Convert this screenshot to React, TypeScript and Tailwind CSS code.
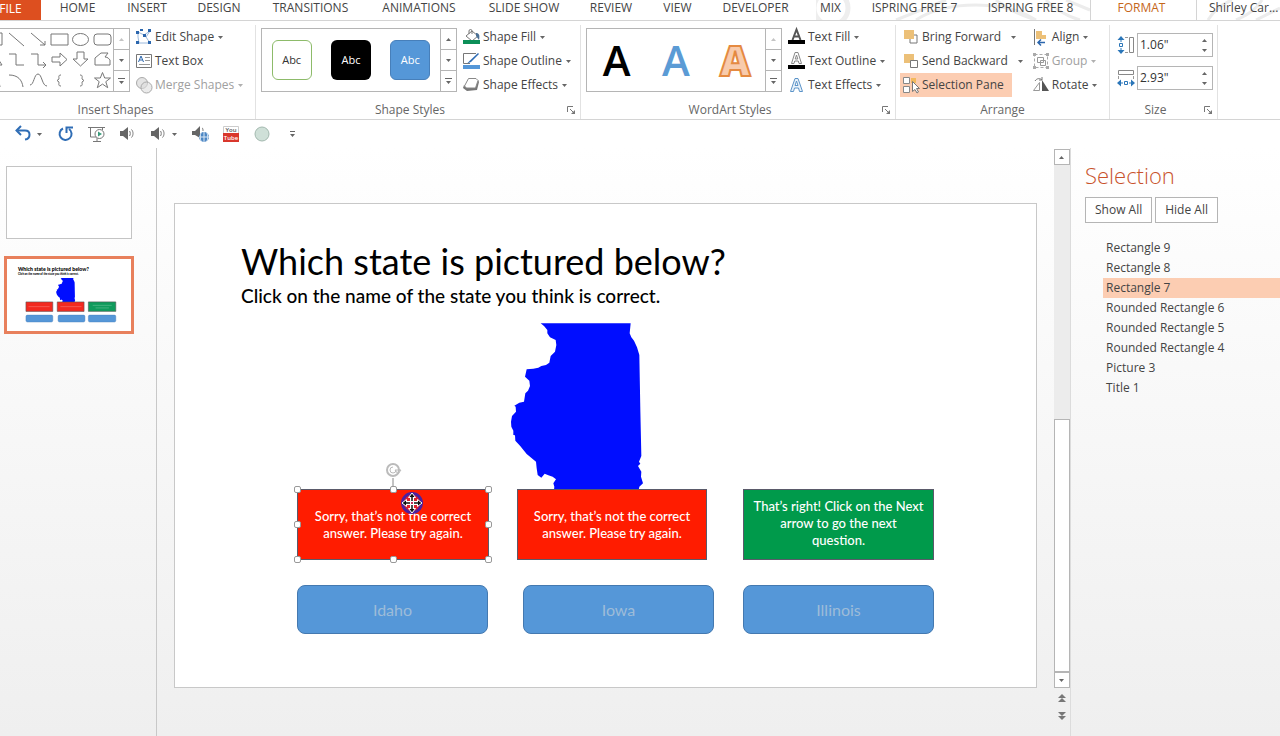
import React, { useState } from 'react';

type Tab = {
  name: string;
  width: string;
};

type Box = {
  text: string;
  place: string;
};

const tabs: Tab[] = [
  { name: 'HOME', width: 'w-[73px]' },
  { name: 'INSERT', width: 'w-[66px]' },
  { name: 'DESIGN', width: 'w-[78px]' },
  { name: 'TRANSITIONS', width: 'w-[105px]' },
  { name: 'ANIMATIONS', width: 'w-[112px]' },
  { name: 'SLIDE SHOW', width: 'w-[98px]' },
  { name: 'REVIEW', width: 'w-[76px]' },
  { name: 'VIEW', width: 'w-[57px]' },
  { name: 'DEVELOPER', width: 'w-[99px]' },
  { name: 'MIX', width: 'w-[51px]' },
  { name: 'ISPRING FREE 7', width: 'w-[117px]' },
  { name: 'ISPRING FREE 8', width: 'w-[115px]' },
];

const shapePaths = [
  'M3 3h13v12H3zM6 6h7M6 9h7M6 12h7',
  'M2 3l15 13',
  'M2 3l14 12M16 11v4h-5',
  'M1 4h17v11H1z',
  'M1.500 9.500a8 6 0 1 0 16 0a8 6 0 1 0 -16 0z',
  'M4 4h11a3 3 0 0 1 3 3v5a3 3 0 0 1 -3 3H4a3 3 0 0 1 -3 -3V7a3 3 0 0 1 3 -3z',
  'M9 4l7 11H3z',
  'M2 4h7v11h8',
  'M2 4h7v11h8M14 12l3 3l-3 3',
  'M2 7h8V3l7 6.500l-7 6.500v-4H2z',
  'M6 2h7v7h4l-7.500 7L2 9h4z',
  'M2 8l6-5h7l-3 4c3 0 4 2 5 3v5H2z',
  'M2 5c8 0 11 4 12 11',
  'M2 4c9 0 13 5 14 12',
  'M1 14c4 0 4-11 8-11s4 12 9 12',
  'M11 4c-3 0-2 2-2 4l-2 1.500l2 1.500c0 2-1 4 2 4',
  'M9 4c3 0 2 2 2 4l2 1.500l-2 1.500c0 2 1 4-2 4',
  'M9.500 1.500l2.200 5.500h5.800l-4.700 3.700l1.900 6l-5.200-3.600l-5.200 3.600l1.900-6L1.500 7h5.800z',
];

const statePath =
  'M122 40H392L389 70L394 82L402 92L411 112L418 135L421 300L424 438L417 455L421 461L414 468L424 485L423 500L429 520L418 530L416 540H162L163 530L160 520L168 508L158 500L145 496L134 491L124 503L113 495L110 475L108 455L80 432L60 407L46 392L45 376L40 375L40 362L34 350L33 335L36 318L48 305L47 290L43 287L58 278L72 275L76 250L84 242L90 228L88 212L75 200L80 178L100 176L115 173L124 168L138 165L148 158L152 138L165 125L169 105L167 90L150 82L142 70L142 60L132 48Z';

const feedback: Box[] = [
  { text: 'Sorry, that’s not the correct answer. Please try again.', place: 'left-[122px] w-[192px] px-3 bg-[#ff1c00]' },
  { text: 'Sorry, that’s not the correct answer. Please try again.', place: 'left-[342px] w-[190px] px-3 bg-[#ff1c00]' },
  {
    text: 'That’s right! Click on the Next\narrow to go the next\nquestion.',
    place: 'left-[568px] w-[191px] px-1 pb-[3px] bg-[#009a4b]',
  },
];

const answers: Box[] = [
  { text: 'Idaho', place: 'left-[122px]' },
  { text: 'Iowa', place: 'left-[348px]' },
  { text: 'Illinois', place: 'left-[568px]' },
];

const handles = [
  'left-[119px] top-[282px]',
  'left-[215px] top-[282px]',
  'left-[310px] top-[282px]',
  'left-[119px] top-[317px]',
  'left-[310px] top-[317px]',
  'left-[119px] top-[352px]',
  'left-[215px] top-[352px]',
  'left-[310px] top-[352px]',
];

const objects = [
  'Rectangle 9',
  'Rectangle 8',
  'Rectangle 7',
  'Rounded Rectangle 6',
  'Rounded Rectangle 5',
  'Rounded Rectangle 4',
  'Picture 3',
  'Title 1',
];

const Arrow: React.FC<{ up?: boolean; className?: string }> = ({ up, className = 'fill-[#666]' }) => (
  <svg width="5" height="3" viewBox="0 0 5 3" className={`shrink-0 ${className}`}>
    <path d={up ? 'M0 3h5L2.500 0z' : 'M0 0h5L2.500 3z'} />
  </svg>
);

const Icon: React.FC<{ children: React.ReactNode }> = ({ children }) => (
  <svg width="18" height="18" viewBox="0 0 18 18" fill="none" className="shrink-0 overflow-visible">
    {children}
  </svg>
);

type CommandProps = {
  icon: React.ReactNode;
  label: string;
  arrow?: 'near' | 'far' | 'none';
  disabled?: boolean;
  active?: boolean;
};

const Command: React.FC<CommandProps> = ({ icon, label, arrow = 'near', disabled, active }) => (
  <button
    disabled={disabled}
    className={`flex h-6 items-center gap-[2px] whitespace-nowrap px-[2px] text-xs ${
      disabled ? 'text-[#a0a0a0]' : 'text-[#444]'
    } ${active ? 'bg-[#fccdb2] pr-2' : ''}`}
  >
    {icon}
    <span>{label}</span>
    {arrow !== 'none' && (
      <span className={arrow === 'far' ? 'pl-2' : 'pl-[2px]'}>
        <Arrow className={disabled ? 'fill-[#b0b0b0]' : 'fill-[#666]'} />
      </span>
    )}
  </button>
);

const GalleryScroll: React.FC<{ topDisabled?: boolean }> = ({ topDisabled }) => (
  <div className="flex w-4 flex-col divide-y divide-[#b5b5b5] border-l border-[#b5b5b5]">
    <button aria-label="Row up" className="flex flex-1 items-center justify-center">
      <Arrow up className={topDisabled ? 'fill-[#c4c4c4]' : 'fill-[#666]'} />
    </button>
    <button aria-label="Row down" className="flex flex-1 items-center justify-center">
      <Arrow />
    </button>
    <button aria-label="More" className="flex flex-1 items-center justify-center">
      <svg width="7" height="7" viewBox="0 0 7 7" className="fill-[#666]">
        <path d="M0 0h7v1H0zM1 3h5L3.500 6z" />
      </svg>
    </button>
  </div>
);

type GroupProps = {
  title: string;
  width: string;
  titlePad?: string;
  launcher?: boolean;
  children: React.ReactNode;
};

const Group: React.FC<GroupProps> = ({ title, width, titlePad = 'pr-4', launcher, children }) => (
  <section className={`flex shrink-0 flex-col border-r border-[#e2e2e2] ${width}`}>
    <div className="flex h-[77px] shrink-0 items-start">{children}</div>
    <div className={`relative flex h-4 items-center justify-center text-xs text-[#666] ${titlePad}`}>
      {title}
      {launcher && (
        <button aria-label={`${title} options`} className="absolute right-1 top-1">
          <svg width="9" height="9" viewBox="0 0 9 9" fill="none" stroke="#777">
            <path d="M.5 6V.5H6M3 3l4 4" />
            <path d="M8 4v4H4z" fill="#777" stroke="none" />
          </svg>
        </button>
      )}
    </div>
  </section>
);

const Speaker = () => (
  <>
    <path d="M2 6h3l5-4v13l-5-4H2z" fill="#666" />
    <path d="M11.500 6c1 1 1 4 0 5M13.500 4.500c2 2 2 6 0 8" stroke="#777" />
  </>
);

const ArrangeIcon: React.FC<{ kind: 'front' | 'back' }> = ({ kind }) => (
  <Icon>
    {kind === 'front' ? (
      <>
        <path d="M8 7h7v8H8z" fill="#fff" stroke="#777" />
        <path d="M2 2h10v9H2z" fill="#ecc078" />
      </>
    ) : (
      <>
        <path d="M2 2h10v9H2z" fill="#ecc078" />
        <path d="M8.500 8.500h7v7h-7z" fill="#fff" stroke="#777" />
      </>
    )}
  </Icon>
);

const Ribbon: React.FC = () => {
  const [height, setHeight] = useState('1.06"');
  const [width, setWidth] = useState('2.93"');

  return (
    <div className="flex h-[99px] overflow-hidden border-b border-[#d4d4d4] bg-white pt-1">
      <Group title="Insert Shapes" width="w-64" titlePad="pr-6">
        <div className="-ml-[16px] mt-[3px] flex h-16 border border-[#b5b5b5]">
          <div className="grid w-[128px] grid-cols-6">
            {shapePaths.map((d, i) => (
              <button key={i} aria-label={`Shape ${i + 1}`} className="flex items-center justify-center">
                <svg width="19" height="19" viewBox="0 0 19 19" fill="none" stroke="#777">
                  <path d={d} />
                </svg>
              </button>
            ))}
          </div>
          <GalleryScroll topDisabled />
        </div>
        <div className="ml-[3px] flex flex-col items-start">
          <Command
            label="Edit Shape"
            icon={
              <Icon>
                <path d="M3 4l6 3l6-4l-4 6l4 6H4l-1-6z" stroke="#9ab8dc" />
                <path d="M1 3h3v3H1zM13 1h3v3h-3zM8 6h3v3H8zM1 13h3v3H1zM13 13h3v3h-3zM5 1h3v2H5z" fill="#2b66ad" />
              </Icon>
            }
          />
          <Command
            label="Text Box"
            arrow="none"
            icon={
              <Icon>
                <path d="M1.500 2.500h15v13h-15z" stroke="#777" />
                <path d="M3.500 10l2.500-6l2.500 6M4.500 8h3" stroke="#2b66ad" />
                <path d="M10 5.500h5M10 8.500h5M4 12.500h11" stroke="#999" />
              </Icon>
            }
          />
          <Command
            label="Merge Shapes"
            disabled
            icon={
              <Icon>
                <circle cx="7" cy="7" r="5.500" fill="#e4e4e4" stroke="#aaa" />
                <circle cx="11.500" cy="11.500" r="5.500" fill="#ddd" fillOpacity=".6" stroke="#aaa" />
              </Icon>
            }
          />
        </div>
      </Group>

      <Group title="Shape Styles" width="w-[325px]" launcher>
        <div className="ml-[5px] mt-[3px] flex h-16 w-[196px] border border-[#b5b5b5]">
          <div className="flex flex-1 items-center justify-around">
            <button className="size-10 rounded-md border border-[#8dbb6a] text-[11px] font-medium text-[#333]">Abc</button>
            <button className="size-10 rounded-md bg-black text-[11px] font-medium text-white">Abc</button>
            <button className="size-10 rounded-md border border-[#477fba] bg-[#5597d8] text-[11px] font-medium text-white">
              Abc
            </button>
          </div>
          <GalleryScroll />
        </div>
        <div className="ml-1 flex flex-col items-start">
          <Command
            label="Shape Fill"
            icon={
              <Icon>
                <path d="M3 8l6-5l6 5l-6 5zM6 6V3a1.500 1.500 0 0 1 3 0v3" stroke="#777" fill="#fff" />
                <path d="M13 5c3 0 4 2 3 7l-3-4z" fill="#4b6f93" />
                <path d="M0 12h17v4H0z" fill="#0c8f58" />
              </Icon>
            }
          />
          <Command
            label="Shape Outline"
            icon={
              <Icon>
                <path d="M13 1.500H.5v10H7" stroke="#777" />
                <path d="M15 1L7 8.500l-3 3l4-1.500l8-8z" fill="#2f6db5" />
                <path d="M0 13h17v4H0z" fill="#5597d8" />
              </Icon>
            }
          />
          <Command
            label="Shape Effects"
            icon={
              <Icon>
                <path d="M4 15l-4-3l1-3l3 3h8l3-8l1 2l-2 8z" fill="#777" />
                <path d="M5.500 2.500H13l2 2L12.500 12H3.500l-2-2z" fill="#fff" stroke="#888" />
              </Icon>
            }
          />
        </div>
      </Group>

      <Group title="WordArt Styles" width="w-[315px]" launcher>
        <div className="ml-[5px] mt-[3px] flex h-16 w-[196px] border border-[#b5b5b5] bg-white">
          <div className="flex flex-1 items-center justify-around text-[42px] font-semibold leading-[62px]">
            <button className="w-10 text-black">A</button>
            <button className="w-10 text-[#5b9bd5]">A</button>
            <button className="w-10 font-extrabold text-[#f8cbac] [-webkit-text-stroke:2px_#e58a41]">A</button>
          </div>
          <GalleryScroll topDisabled />
        </div>
        <div className="ml-1 flex flex-col items-start">
          <Command
            label="Text Fill"
            icon={
              <Icon>
                <path d="M4.500 12L8.500 1.500L12.500 12M6 8.500h5" stroke="#555" strokeWidth="2" />
                <path d="M0 12h17v4H0z" fill="#000" />
              </Icon>
            }
          />
          <Command
            label="Text Outline"
            icon={
              <Icon>
                <path d="M3.500 11.500L7 .5h3l3.500 11H11l-.7-2.500H6.700L6 11.500zM7.200 7h2.600L8.500 3z" stroke="#888" />
                <path d="M0 13h17v4H0z" fill="#000" />
              </Icon>
            }
          />
          <Command
            label="Text Effects"
            icon={
              <Icon>
                <path
                  d="M2.500 15.500L7 2.500h3l4.500 13h-3l-1-3.500h-4l-1 3.500zM7 9.500h3L8.500 5z"
                  fill="#eaf3fb"
                  stroke="#5b93c8"
                />
              </Icon>
            }
          />
        </div>
      </Group>

      <Group title="Arrange" width="w-[214px]" titlePad="pr-0">
        <div className="ml-1 flex flex-col items-start">
          <Command label="Bring Forward" arrow="far" icon={<ArrangeIcon kind="front" />} />
          <Command label="Send Backward" arrow="far" icon={<ArrangeIcon kind="back" />} />
          <Command
            label="Selection Pane"
            arrow="none"
            active
            icon={
              <Icon>
                <path d="M1.500 1.500h6v6h-6zM1.500 10.500h6v6h-6z" stroke="#888" fill="#fff" />
                <path d="M9 2h5v5H9z" fill="#f2b95e" />
                <path d="M10.500 5.500v10l2.500-2l2 3.500l1.500-1l-2-3.500h3z" fill="#fff" stroke="#777" />
              </Icon>
            }
          />
        </div>
        <div className="ml-[5px] flex flex-col items-start">
          <Command
            label="Align"
            icon={
              <Icon>
                <path d="M2.500 1v16" stroke="#777" />
                <path d="M4 3h6v4H4zM4 7h10v4H4z" fill="#ecc078" />
                <path d="M6 14.500h7M9 11.500l-3 3l3 3" stroke="#2b66ad" strokeWidth="1.500" />
              </Icon>
            }
          />
          <Command
            label="Group"
            disabled
            icon={
              <Icon>
                <path d="M2.500 2.500h13v13h-13z" stroke="#aaa" strokeDasharray="3 2" />
                <path d="M5.500 5.500h6v5h-6zM8.500 8.500h5v5h-5z" stroke="#999" />
                <path d="M1 1h3v3H1zM14 1h3v3h-3zM1 14h3v3H1zM14 14h3v3h-3z" fill="#aaa" />
              </Icon>
            }
          />
          <Command
            label="Rotate"
            icon={
              <Icon>
                <path d="M1.500 14.500h6v-8z" stroke="#999" />
                <path d="M10 4v11h7z" fill="#555" />
                <path d="M3 5c2-3 5-3 7-1M10 1v3H7" stroke="#777" />
              </Icon>
            }
          />
        </div>
      </Group>

      <Group title="Size" width="w-[108px]" launcher>
        <div className="ml-[7px] mt-2 flex flex-col gap-[9px]">
          <SizeField label="Shape height" value={height} onChange={setHeight} tall />
          <SizeField label="Shape width" value={width} onChange={setWidth} />
        </div>
      </Group>
    </div>
  );
};

type SizeFieldProps = {
  label: string;
  value: string;
  onChange: (value: string) => void;
  tall?: boolean;
};

const SizeField: React.FC<SizeFieldProps> = ({ label, value, onChange, tall }) => (
  <label className="flex h-6 items-center gap-[2px]">
    <Icon>
      {tall ? (
        <>
          <path d="M12.500 1.500h4v15h-4z" stroke="#888" />
          <path d="M4 0l3.500 4h-7zM4 18l3.500-4h-7z" fill="#2b76b9" />
          <path d="M4 3v3M4 12v3M2.500 7.500h3v3h-3z" stroke="#2b76b9" />
          <path d="M8 1.500h3M8 16.500h3" stroke="#999" />
        </>
      ) : (
        <>
          <path d="M1.500 1.500h15v4h-15z" stroke="#888" />
          <path d="M0 14l4-3.500v7zM18 14l-4-3.500v7z" fill="#2b76b9" />
          <path d="M3 14h3M12 14h3M7.500 12.500h3v3h-3z" stroke="#2b76b9" />
          <path d="M1.500 7v3M16.500 7v3" stroke="#999" />
        </>
      )}
    </Icon>
    <span className="flex h-6 w-[76px] items-center border border-[#b5b5b5] bg-white pr-[5px]">
      <input
        aria-label={label}
        value={value}
        onChange={(e) => onChange(e.target.value)}
        className="w-full min-w-0 px-[2px] text-xs text-[#333] outline-none"
      />
      <span className="flex flex-col gap-[7px]">
        <Arrow up />
        <Arrow />
      </span>
    </span>
  </label>
);

const QuickAccess: React.FC = () => (
  <div className="flex h-7 items-center pl-[14px]">
    <button aria-label="Undo" className="flex w-[43px] items-center gap-[5px]">
      <Icon>
        <path d="M4 5.500h7c6 0 6 8 0 9" stroke="#2f6db5" strokeWidth="2" />
        <path d="M7 1L2.500 5.500L7 10" stroke="#2f6db5" strokeWidth="2" />
      </Icon>
      <Arrow />
    </button>
    <button aria-label="Repeat" className="w-[31px]">
      <Icon>
        <path d="M6 3.500a6 6 0 1 0 6 .5" stroke="#2f6db5" strokeWidth="2" />
        <path d="M9.500 8V2.500H16" stroke="#2f6db5" strokeWidth="2" />
      </Icon>
    </button>
    <button aria-label="Start slide show" className="w-[30px]">
      <Icon>
        <path d="M0 2.500h17M2.500 3v9H8M9 12v4M5 16.500h8" stroke="#777" />
        <path d="M14.500 3v2" stroke="#777" />
        <circle cx="11.500" cy="9" r="4.500" fill="#fff" stroke="#777" />
        <path d="M10 6.500v5l4-2.500z" fill="#3a9b7b" />
      </Icon>
    </button>
    <button aria-label="Audio" className="w-[31px]">
      <Icon>
        <Speaker />
      </Icon>
    </button>
    <button aria-label="Insert audio" className="flex w-[42px] items-center gap-[5px]">
      <Icon>
        <Speaker />
      </Icon>
      <Arrow />
    </button>
    <button aria-label="Online audio" className="w-[31px]">
      <Icon>
        <path d="M1 6h3l5-5v12L4 10H1z" fill="#666" />
        <circle cx="13" cy="12" r="5" fill="#4d87c4" />
        <path d="M8 12h10M13 7v10M10 8c-1 2-1 6 0 8M16 8c1 2 1 6 0 8" stroke="#dbe8f5" />
        <path d="M11 3c1 0 1 2 1 3" stroke="#777" />
      </Icon>
    </button>
    <button aria-label="YouTube video" className="w-[31px]">
      <Icon>
        <path d="M1.500 1.500h15v15h-15z" fill="#fff" stroke="#ccc" />
        <path d="M1 8h16v9H1z" fill="#d9372c" />
        <text x="9" y="7" textAnchor="middle" fontSize="6" fontWeight="600" fill="#555">You</text>
        <text x="9" y="15" textAnchor="middle" fontSize="6" fontWeight="600" fill="#fff">Tube</text>
      </Icon>
    </button>
    <button aria-label="Shape" className="w-9">
      <Icon>
        <circle cx="9" cy="9" r="7" fill="#cfe0d8" stroke="#a3b9af" />
      </Icon>
    </button>
    <button aria-label="Customize toolbar">
      <svg width="7" height="7" viewBox="0 0 7 7" className="fill-[#666]">
        <path d="M1 0h5v1H1zM1 3h5L3.500 6z" />
      </svg>
    </button>
  </div>
);

const Thumbnail: React.FC = () => (
  <svg viewBox="0 0 864 486" className="block w-full bg-white">
    <g fill="#000" fontFamily="Lato, sans-serif" fontWeight="900">
      <text x="76" y="77" fontSize="36">Which state is pictured below?</text>
      <text x="76" y="106" fontSize="19">Click on the name of the state you think is correct.</text>
    </g>
    <g transform="translate(332 112) scale(.3333)">
      <path d={statePath} fill="#000dff" />
    </g>
    <g stroke="#555" strokeWidth="4">
      <path d="M132 292h187v66H132zM350 292h187v66H350z" fill="#f22a20" />
      <path d="M567 292h191v66H567z" fill="#0f9b5c" />
    </g>
    <g fill="#5597d8" stroke="#477fba" strokeWidth="3">
      <rect x="132" y="384" width="187" height="48" rx="10" />
      <rect x="356" y="384" width="187" height="48" rx="10" />
      <rect x="567" y="384" width="191" height="48" rx="10" />
    </g>
    <path d="M150 325h147M372 325h147M597 316h133M617 334h93" stroke="#fff" strokeOpacity=".3" strokeWidth="5" />
  </svg>
);

const Slide: React.FC = () => (
  <div className="relative aspect-video w-full border border-[#c8c8c8] bg-white font-[Lato,sans-serif]">
    <div className="pl-[66px] pt-[35px] text-black">
      <h1 className="text-[36px] leading-[44px]">Which state is pictured below?</h1>
      <p className="text-[19px] font-medium leading-[26px]">Click on the name of the state you think is correct.</p>
    </div>
    <svg width="160" height="190" viewBox="0 0 480 570" className="absolute left-[325px] top-[106px]">
      <path d={statePath} fill="#000dff" />
    </svg>
    {feedback.map((box) => (
      <button
        key={box.place}
        className={`absolute top-[285px] flex h-[71px] items-center justify-center whitespace-pre-line border border-[#5a5a6a] text-center text-[13px] font-medium leading-[17px] text-white ${box.place}`}
      >
        {box.text}
      </button>
    ))}
    {answers.map((box) => (
      <button
        key={box.text}
        className={`absolute top-[381px] h-[49px] w-[191px] rounded-lg border border-[#4479b0] bg-[#5597d8] text-base text-[#9dbcd8] ${box.place}`}
      >
        {box.text}
      </button>
    ))}
    <svg width="20" height="28" viewBox="0 0 20 28" fill="none" className="absolute left-[208px] top-[257px]">
      <path d="M10 17v11" stroke="#888" />
      <circle cx="10" cy="9" r="6" fill="#fff" stroke="#bbb" strokeWidth="2" />
      <path d="M10 6a3 3 0 1 0 3 3M12 9h6l-3 4z" stroke="#bbb" />
    </svg>
    {handles.map((place) => (
      <span key={place} className={`absolute size-[7px] rounded-[2px] border border-[#999] bg-white ${place}`} />
    ))}
    <svg width="24" height="24" viewBox="0 0 24 24" fill="none" className="absolute left-[225px] top-[287px]">
      <circle cx="12" cy="12" r="9.500" fill="#e0202c" stroke="#4b219f" strokeWidth="3" />
      <path d="M12 4v16M4 12h16" stroke="#fff" strokeWidth="4" />
      <path d="M12 2l3.500 4.500h-7zM12 22l3.500-4.500h-7zM2 12l4.500-3.500v7zM22 12l-4.500-3.500v7z" fill="#111" stroke="#fff" />
      <path d="M12 5v5M12 14v5M5 12h5M14 12h5" stroke="#111" strokeWidth="1.500" />
      <path d="M11 11h2v2h-2z" fill="#c03060" />
    </svg>
  </div>
);

const App: React.FC = () => {
  const [selected, setSelected] = useState('Rectangle 7');

  return (
    <div className="flex min-h-screen flex-col overflow-hidden bg-linear-to-b from-white from-20% to-[#efefef] font-['Open_Sans',sans-serif]">
      <nav className="relative flex h-[21px] items-start overflow-hidden border-b border-[#d4d4d4] bg-white text-xs text-[#444]">
        <svg width="464" height="20" viewBox="0 0 464 20" fill="none" className="absolute left-[816px] top-0">
          <circle cx="15" cy="8" r="17" stroke="#eee" strokeWidth="5" />
          <path d="M80 20L130 0M100 20c30-20 90-20 120 0M180 0c10 8 20 14 40 20M230 0c10 10 20 16 34 20M250 0l24 10" stroke="#ececec" strokeWidth="3" />
          <path d="M392 20c6-10 14-16 24-20M420 20c10-4 20-10 26-20M440 20l24-12" stroke="#ececec" strokeWidth="3" />
        </svg>
        <button className="-ml-5 h-[21px] w-[61px] shrink-0 bg-[#dd4f1f] pb-1 leading-4 text-white">FILE</button>
        {tabs.map((tab) => (
          <button key={tab.name} className={`relative shrink-0 whitespace-nowrap leading-4 ${tab.width}`}>
            {tab.name}
          </button>
        ))}
        <button className="relative ml-[2px] h-[21px] w-[107px] shrink-0 border-x border-[#d4d4d4] bg-white pb-[5px] pr-1 leading-4 text-[#c5661a]">
          FORMAT
        </button>
        <a href="#account" className="relative ml-3 whitespace-nowrap leading-4">
          Shirley Car...
        </a>
      </nav>

      <Ribbon />
      <QuickAccess />

      <div className="flex flex-1">
        <aside className="flex w-[157px] shrink-0 flex-col gap-[17px] border-r border-[#c8c8c8] pl-1 pr-[22px] pt-[18px]">
          <button aria-label="Slide 1" className="mx-[2px] h-[73px] border border-[#c4c4c4] bg-white" />
          <button aria-label="Slide 2" className="border-[3px] border-[#e8805c] bg-white py-[1px]">
            <Thumbnail />
          </button>
        </aside>

        <main className="min-w-0 flex-1 pl-[17px] pr-4 pt-[55px]">
          <Slide />
        </main>

        <div className="flex w-[18px] shrink-0 flex-col items-center border-r border-[#dcdcdc] pb-4 pt-[1px]">
          <button aria-label="Scroll up" className="flex h-4 w-4 items-center justify-center border border-[#b5b5b5] bg-white">
            <Arrow up />
          </button>
          <div className="flex w-4 flex-1 flex-col justify-end bg-[#ececec]">
            <div className="h-1/2 border border-[#b5b5b5] bg-white" />
          </div>
          <button aria-label="Scroll down" className="flex h-4 w-4 items-center justify-center border border-[#b5b5b5] bg-white">
            <Arrow />
          </button>
          <button aria-label="Previous slide" className="mt-[6px]">
            <svg width="8" height="8" viewBox="0 0 8 8" className="fill-[#777]">
              <path d="M0 4h8L4 0zM0 8h8L4 4z" />
            </svg>
          </button>
          <button aria-label="Next slide" className="mt-[10px]">
            <svg width="8" height="8" viewBox="0 0 8 8" className="fill-[#777]">
              <path d="M0 0h8L4 4zM0 4h8L4 8z" />
            </svg>
          </button>
        </div>

        <aside className="w-[209px] shrink-0 pt-3 text-xs text-[#444]">
          <h2 className="pl-[14px] text-[22px] font-light leading-[30px] text-[#c8522b]">Selection</h2>
          <div className="mt-[7px] flex gap-[3px] pl-[14px]">
            <button className="h-[26px] border border-[#b5b5b5] bg-white px-[9px]">Show All</button>
            <button className="h-[26px] border border-[#b5b5b5] bg-white px-[9px]">Hide All</button>
          </div>
          <ul className="ml-8 mt-[15px]">
            {objects.map((name) => (
              <li key={name}>
                <button
                  onClick={() => setSelected(name)}
                  className={`block h-5 w-full pl-[3px] text-left ${name === selected ? 'bg-[#fccdb2]' : ''}`}
                >
                  {name}
                </button>
              </li>
            ))}
          </ul>
        </aside>
      </div>
    </div>
  );
};

export default App;
